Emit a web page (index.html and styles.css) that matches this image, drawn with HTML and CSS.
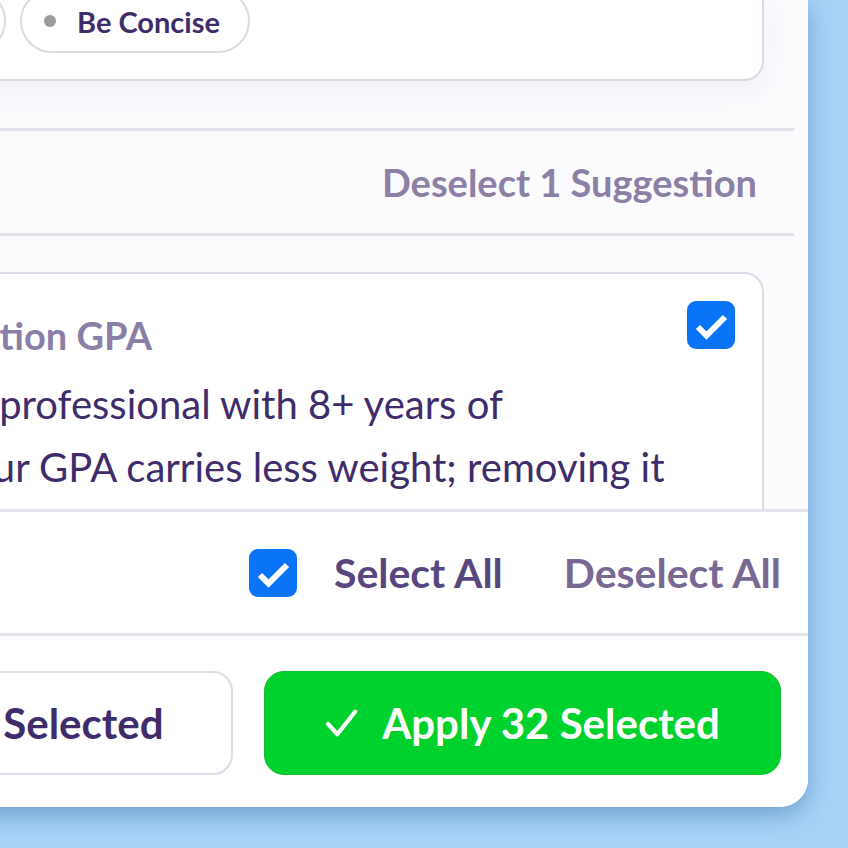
FILE: index.html
```html
<!DOCTYPE html>
<html lang="en">
<head>
<meta charset="utf-8">
<title>Suggestions</title>
<link rel="stylesheet" href="styles.css">
</head>
<body>
<div class="panel">
  <div class="scroll">
    <div class="card card-top">
      <div class="pills">
        <span class="pill pill-prev"><span class="dot"></span><span class="pill-text">Quantify Impact</span></span>
        <span class="pill"><span class="dot"></span><span class="pill-text">Be Concise</span></span>
      </div>
    </div>
    <div class="rule"></div>
    <div class="section-row">
      <button class="link-btn">Deselect 1 Suggestion</button>
    </div>
    <div class="rule"></div>
    <div class="card card-sugg">
      <div class="sugg-head">
        <h3 class="sugg-title">Delete Graduation GPA</h3>
        <span class="checkbox">
          <svg viewBox="0 0 48 48" width="48" height="48"><path d="M11 26 L19.5 34.5 L38 16" fill="none" stroke="#fff" stroke-width="6"/></svg>
        </span>
      </div>
      <p class="sugg-body">As a seasoned professional with 8+ years of<br>experience, your GPA carries less weight; removing it<br>frees space for more relevant achievements.</p>
    </div>
  </div>
  <div class="footer">
    <div class="select-row">
      <label class="select-all">
        <span class="checkbox">
          <svg viewBox="0 0 48 48" width="48" height="48"><path d="M11 26 L19.5 34.5 L38 16" fill="none" stroke="#fff" stroke-width="6"/></svg>
        </span>
        <span class="select-text">Select All</span>
      </label>
      <button class="deselect-all">Deselect All</button>
    </div>
    <div class="actions">
      <button class="btn btn-outline">Remove 32 Selected</button>
      <button class="btn btn-green">
        <svg class="btn-check" viewBox="0 0 36 32" width="34" height="30"><path d="M3 17 L13 28 L32 4" fill="none" stroke="#fff" stroke-width="4.5" stroke-linecap="round" stroke-linejoin="round"/></svg>
        <span>Apply 32 Selected</span>
      </button>
    </div>
  </div>
</div>
</body>
</html>
```

FILE: styles.css
```css
* { box-sizing: border-box; }
html, body { margin: 0; padding: 0; }
body {
  width: 848px;
  height: 848px;
  overflow: hidden;
  background: #a7d3f7;
  font-family: "Lato", "Open Sans", sans-serif;
  color: #3f2c6a;
}
button { font-family: inherit; background: none; border: none; padding: 0; cursor: pointer; }

.panel {
  width: 1128px;
  height: 807px;
  margin-left: -320px;
  background: #fff;
  border-radius: 0 0 28px 0;
  overflow: hidden;
  box-shadow: 0 8px 24px rgba(40, 90, 150, 0.42);
  display: flex;
  flex-direction: column;
}

.scroll {
  height: 509px;
  overflow: hidden;
  background: #fbfbfe;
  padding: 0 14px 0 32px;
}

.card {
  background: #fff;
  border: 2px solid #dcd9e5;
  border-radius: 20px;
  margin-right: 30px;
}
.card-top {
  margin-top: -29px;
  padding: 16px 20px 26px 20px;
  box-shadow: 0 10px 26px rgba(70, 60, 120, 0.06);
}
.pills { display: flex; gap: 14px; }
.pill {
  height: 64px;
  border: 2px solid #dcdae3;
  border-radius: 32px;
  display: flex;
  align-items: center;
  gap: 21px;
  padding: 0 28px 0 22px;
  background: #fff;
}
.pill-prev { width: 272px; justify-content: flex-end; }
.dot { width: 12px; height: 12px; border-radius: 50%; background: #9c9c9c; flex: none; }
.pill-text { font-size: 29px; font-weight: 700; color: #3f2c6a; white-space: nowrap; }

.rule { height: 3px; background: #e2e0ea; }
.card-top + .rule { margin-top: 47px; }

.section-row {
  height: 102px;
  display: flex;
  align-items: center;
  justify-content: flex-end;
  padding-right: 37px;
}
.link-btn {
  font-size: 38px;
  font-weight: 700;
  color: #8c80a7;
  white-space: nowrap;
}

.card-sugg {
  margin-top: 36px;
  padding: 27px 27px 40px 26px;
}
.sugg-head { display: flex; align-items: flex-start; justify-content: space-between; }
.sugg-title {
  margin: 14px 0 0 15px;
  font-size: 38px;
  line-height: 40px;
  font-weight: 700;
  color: #8a7fa6;
  white-space: nowrap;
}
.checkbox {
  width: 48px;
  height: 48px;
  border-radius: 9px;
  background: #0a74f8;
  display: block;
  flex: none;
}
.checkbox svg { display: block; }
.sugg-body {
  margin: 18px 0 0;
  font-size: 40px;
  line-height: 63px;
  color: #3f2c6a;
  white-space: nowrap;
}

.footer {
  flex: 1;
  background: #fff;
  border-top: 3px solid #e3e1ea;
  display: flex;
  flex-direction: column;
}
.select-row {
  height: 124px;
  border-bottom: 3px solid #e3e1ea;
  display: flex;
  align-items: center;
  justify-content: flex-end;
  padding: 0 27px 0 0;
  gap: 61px;
}
.select-all { display: flex; align-items: center; gap: 37px; }
.select-text { font-size: 41px; font-weight: 700; color: #58477f; }
.deselect-all { font-size: 41px; font-weight: 700; color: #776894; }

.actions {
  flex: 1;
  display: flex;
  gap: 31px;
  padding: 35px 27px 32px 34px;
}
.btn {
  flex: 1;
  height: 104px;
  border-radius: 20px;
  font-size: 42px;
  font-weight: 700;
  display: flex;
  align-items: center;
  justify-content: center;
  white-space: nowrap;
}
.btn-outline {
  border: 2px solid #dfdde7;
  background: #fff;
  color: #3f2c6a;
}
.btn-green {
  background: #00d22d;
  border: 1px solid #14b92e;
  color: #fff;
  gap: 23px;
}
.btn-check { display: block; }
```
